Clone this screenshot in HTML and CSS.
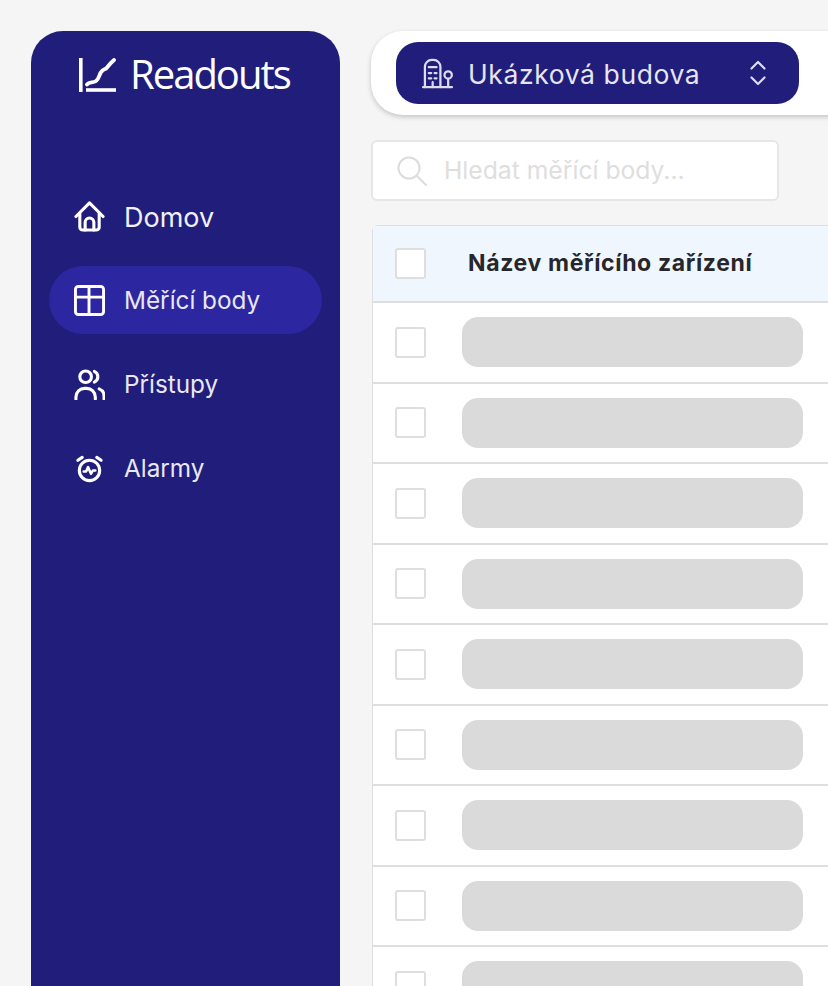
FILE: index.html
```html
<!DOCTYPE html>
<html lang="cs">
<head>
<meta charset="utf-8">
<title>Readouts</title>
<link rel="stylesheet" href="styles.css">
</head>
<body>
<div class="app">
  <aside class="sidebar">
    <div class="logo">
      <svg class="logo-icon" viewBox="0 0 37 34" fill="none" stroke="#fff"><path d="M1.800 0v34" stroke-width="3.600"/><path d="M7 32h30" stroke-width="3.600"/><path d="M8 26.500c2-2.500 6-1.500 9-3.500 4-3 2.500-7 6.500-10.500 2-1.500 3-1 4.500-3 2-2.500 4-5 7-7.500" stroke-width="3.800" stroke-linecap="round"/></svg>
      <span class="logo-text">Readouts</span>
    </div>
    <nav class="nav">
      <a class="nav-item home">
        <svg class="nav-icon" viewBox="0 0 32 32" fill="none" stroke="#fff" stroke-width="3.200" stroke-linecap="round" stroke-linejoin="round"><path d="M2 16 16 2l14 14"/><path d="M6 13v14a3 3 0 0 0 3 3h14a3 3 0 0 0 3-3V13"/><path d="M11.500 30v-8a4.500 4.500 0 0 1 9 0v8"/></svg>
        <span class="home-label">Domov</span>
      </a>
      <a class="nav-item active">
        <svg class="nav-icon" viewBox="0 0 32 32" fill="none" stroke="#fff" stroke-width="3" stroke-linejoin="round"><rect x="1.500" y="1.500" width="29" height="29" rx="3"/><path d="M1.500 12.500h29M15.500 1.500v29"/></svg>
        <span>Měřící body</span>
      </a>
      <a class="nav-item">
        <svg class="nav-icon" viewBox="0 0 32 32" fill="none" stroke="#fff" stroke-width="3.200" stroke-linecap="round"><circle cx="12" cy="8" r="6"/><path d="M2 31v-2a9 9 0 0 1 9-9h2a9 9 0 0 1 9 9v2"/><path d="M21 2.500a6 6 0 0 1 0 11"/><path d="M26 20.500a8 8 0 0 1 5 7.500v3"/></svg>
        <span>Přístupy</span>
      </a>
      <a class="nav-item">
        <svg class="nav-icon" viewBox="0 0 32 32" fill="none" stroke="#fff" stroke-width="3.200" stroke-linecap="round" stroke-linejoin="round"><circle cx="16" cy="18" r="10.500"/><path d="M4 7.500 8.500 4.500M28 7.500 23.500 4.500"/><path d="M10 19h2.500l2-4.500 3 7 2-3.500h2.500" stroke-width="2.600"/></svg>
        <span>Alarmy</span>
      </a>
    </nav>
  </aside>
  <main class="main">
    <header class="topbar">
      <div class="building">
        <svg class="building-icon" viewBox="0 0 32 32" fill="none" stroke="#dcdcec" stroke-width="2.300" stroke-linecap="round" stroke-linejoin="round"><path d="M1 30h30"/><path d="M3 30V9a7 7 0 0 1 7-7h2a7 7 0 0 1 7 7v21"/><path d="M7 9.500h8M7 15.500h2.500M13 15.500h2M7 21h2.500M13 21h2M11 30v-5"/><circle cx="27" cy="17.500" r="3.800"/><path d="M27 21.500V30"/></svg>
        <span class="building-name">Ukázková budova</span>
        <svg class="chevrons" viewBox="0 0 18 28" fill="none" stroke="#dcdcec" stroke-width="2.200" stroke-linecap="round" stroke-linejoin="round"><path d="M2.500 9.500 9 3l6.500 6.500M2.500 18.500 9 25l6.500-6.500"/></svg>
      </div>
    </header>
    <div class="search">
      <svg class="search-icon" viewBox="0 0 30 30" fill="none" stroke="#dcdcdc" stroke-width="2" stroke-linecap="round"><circle cx="12" cy="12" r="10.500"/><path d="m20 20 9 9"/></svg>
      <span class="search-text">Hledat měřící body...</span>
    </div>
    <section class="table">
      <div class="row head">
        <span class="check"></span>
        <span class="title">Název měřícího zařízení</span>
      </div>
      <div class="row"><span class="check"></span><span class="skeleton"></span></div>
      <div class="row"><span class="check"></span><span class="skeleton"></span></div>
      <div class="row"><span class="check"></span><span class="skeleton"></span></div>
      <div class="row"><span class="check"></span><span class="skeleton"></span></div>
      <div class="row"><span class="check"></span><span class="skeleton"></span></div>
      <div class="row"><span class="check"></span><span class="skeleton"></span></div>
      <div class="row"><span class="check"></span><span class="skeleton"></span></div>
      <div class="row"><span class="check"></span><span class="skeleton"></span></div>
      <div class="row"><span class="check"></span><span class="skeleton"></span></div>
    </section>
  </main>
</div>
</body>
</html>
```
FILE: styles.css
```css
* { box-sizing: border-box; }
html, body { margin: 0; height: 100%; overflow: hidden; }
body { background: #f5f5f5; font-family: Inter, "Liberation Sans", sans-serif; }
.app { display: flex; align-items: flex-start; padding: 31px 0 0 31px; width: 828px; height: 986px; overflow: hidden; }
.sidebar { flex: 0 0 309px; height: 1100px; background: #211d7a; border-radius: 32px 32px 0 0; padding: 24px 18px 0; color: #fff; }
.logo { display: flex; align-items: center; gap: 14px; padding-left: 30px; height: 40px; }
.logo-icon { width: 37px; height: 34px; flex: none; }
.logo-text { margin-bottom: 2px; font-family: "Open Sans", sans-serif; font-size: 40px; line-height: 40px; letter-spacing: -2px; color: #fff; }
.nav { display: flex; flex-direction: column; gap: 16px; margin-top: 87px; }
.nav-item { display: flex; align-items: center; gap: 19px; height: 68px; padding-left: 25px; border-radius: 34px; font-size: 24.300px; color: #e8e8f4; }
.nav-item.home { font-size: 27px; color: #f0f0f8; }
.home-label { margin-top: 2px; }
.nav-item.active { background: #2c27a0; }
.nav-icon { width: 31px; height: 31px; flex: none; }
.main { flex: 0 0 auto; width: 457px; margin-left: 31px; }
.topbar { width: 500px; height: 84px; padding: 11px 0 0 25px; background: #fff; border-radius: 32px 0 0 32px; box-shadow: 0 2px 5px rgba(0,0,0,0.2); }
.building { display: flex; align-items: center; width: 403px; height: 62px; padding: 0 32px 0 26px; background: #211d7a; border-radius: 22px; }
.building-icon { width: 31px; height: 31px; flex: none; }
.building-name { flex: 1; margin: 2px 0 0 15px; font-size: 26.500px; letter-spacing: 0.600px; color: #e6e6f2; }
.chevrons { width: 18px; height: 28px; flex: none; }
.search { display: flex; align-items: center; gap: 17px; width: 408px; height: 61px; margin: 25px 0 0 0; padding-left: 24px; background: #fff; border: 2px solid #e6e6e6; border-radius: 6px; font-size: 24.700px; color: #dedede; }
.search-text { margin-bottom: 2px; }
.search-icon { width: 30px; height: 30px; flex: none; }
.table { margin: 24px 0 0 1px; background: #fff; border: 1px solid #dedede; border-right: 0; border-bottom: 0; border-radius: 6px 0 0 0; }
.row { display: flex; align-items: center; height: 80.500px; padding-left: 22px; border-bottom: 2px solid #dedede; }
.row.head { height: 77px; background: #f0f6fe; }
.check { flex: none; width: 31px; height: 31px; background: #fff; border: 2px solid #dedede; border-radius: 3px; }
.title { margin: 0 0 2px 42px; font-size: 23px; font-weight: 700; letter-spacing: 0.650px; color: #26262b; }
.skeleton { flex: none; width: 341px; height: 50px; margin-left: 36px; background: #dadada; border-radius: 16px; }
```
